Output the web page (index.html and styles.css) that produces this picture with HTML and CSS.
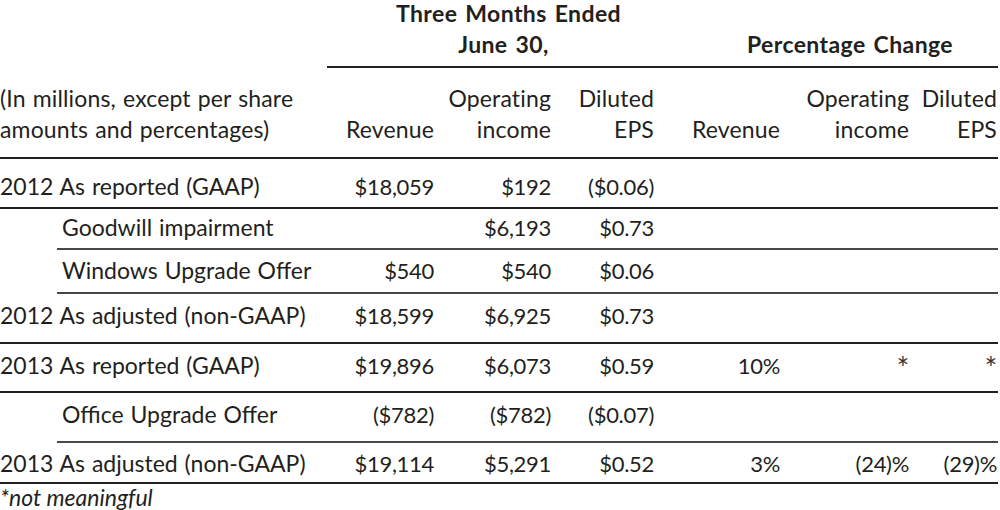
FILE: index.html
```html
<!DOCTYPE html>
<html lang="en">
<head>
<meta charset="utf-8">
<title>Three Months Ended June 30</title>
<link rel="stylesheet" href="styles.css">
</head>
<body>
<div class="sheet">
  <div class="group-head">
    <div class="gh-line1"><span class="gh-three">Three Months Ended</span></div>
    <div class="gh-line2"><span class="gh-june">June 30,</span><span class="gh-pct">Percentage Change</span></div>
  </div>

  <div class="row col-head">
    <div class="c label">(In millions, except per share<br>amounts and percentages)</div>
    <div class="c c2">Revenue</div>
    <div class="c c3">Operating<br>income</div>
    <div class="c c4">Diluted<br>EPS</div>
    <div class="c c5">Revenue</div>
    <div class="c c6">Operating<br>income</div>
    <div class="c c7">Diluted<br>EPS</div>
  </div>

  <div class="row r-a">
    <div class="c label">2012 As reported (GAAP)</div>
    <div class="c c2">$18,059</div>
    <div class="c c3">$192</div>
    <div class="c c4">($0.06)</div>
    <div class="c c5"></div>
    <div class="c c6"></div>
    <div class="c c7"></div>
  </div>

  <div class="row sub r-b">
    <div class="c label">Goodwill impairment</div>
    <div class="c c2"></div>
    <div class="c c3">$6,193</div>
    <div class="c c4">$0.73</div>
    <div class="c c5"></div>
    <div class="c c6"></div>
    <div class="c c7"></div>
  </div>

  <div class="row sub r-c">
    <div class="c label">Windows Upgrade Offer</div>
    <div class="c c2">$540</div>
    <div class="c c3">$540</div>
    <div class="c c4">$0.06</div>
    <div class="c c5"></div>
    <div class="c c6"></div>
    <div class="c c7"></div>
  </div>

  <div class="row r-d">
    <div class="c label">2012 As adjusted (non-GAAP)</div>
    <div class="c c2">$18,599</div>
    <div class="c c3">$6,925</div>
    <div class="c c4">$0.73</div>
    <div class="c c5"></div>
    <div class="c c6"></div>
    <div class="c c7"></div>
  </div>

  <div class="row r-e">
    <div class="c label">2013 As reported (GAAP)</div>
    <div class="c c2">$19,896</div>
    <div class="c c3">$6,073</div>
    <div class="c c4">$0.59</div>
    <div class="c c5">10%</div>
    <div class="c c6 ast">*</div>
    <div class="c c7 ast">*</div>
  </div>

  <div class="row sub r-f">
    <div class="c label">Office Upgrade Offer</div>
    <div class="c c2">($782)</div>
    <div class="c c3">($782)</div>
    <div class="c c4">($0.07)</div>
    <div class="c c5"></div>
    <div class="c c6"></div>
    <div class="c c7"></div>
  </div>

  <div class="row r-g">
    <div class="c label">2013 As adjusted (non-GAAP)</div>
    <div class="c c2">$19,114</div>
    <div class="c c3">$5,291</div>
    <div class="c c4">$0.52</div>
    <div class="c c5">3%</div>
    <div class="c c6">(24)%</div>
    <div class="c c7">(29)%</div>
  </div>

  <div class="footnote">*not meaningful</div>
</div>
</body>
</html>
```

FILE: styles.css
```css
html, body {
  margin: 0;
  padding: 0;
  background: #ffffff;
}

body {
  font-family: Lato, "Open Sans", "Liberation Sans", sans-serif;
  font-size: 22px;
  color: #231f20;
}

.sheet {
  width: 998px;
}

/* top grouped headings */
.group-head {
  margin-left: 327px;
  border-bottom: 2px solid #231f20;
  font-weight: 700;
  font-size: 23px;
  letter-spacing: 0.4px;
  word-spacing: 2px;
}

.gh-line1 {
  display: flex;
  height: 26px;
  line-height: 26px;
}

.gh-three {
  width: 363px;
  text-align: center;
}

.gh-line2 {
  display: flex;
  line-height: 31px;
  padding-top: 3px;
  padding-bottom: 6px;
}

.gh-june {
  width: 353px;
  text-align: center;
}

.gh-pct {
  flex: 1;
  padding-left: 22px;
  text-align: center;
}

/* rows */
.row {
  display: flex;
  line-height: 31px;
  border-bottom: 2px solid #231f20;
}

.row.sub {
  margin-left: 57px;
  border-bottom-color: #4a4747;
}

.c {
  text-align: right;
  white-space: nowrap;
  font-size: 22px;
  letter-spacing: -0.3px;
}

.c.label,
.col-head .c {
  font-size: 23px;
  letter-spacing: 0;
  word-spacing: 1px;
}

.col-head .c {
  letter-spacing: 0.15px;
}

.c.label {
  width: 340px;
  text-align: left;
}

.row.sub .c.label {
  width: 278px;
  padding-left: 5px;
}

.c2 { width: 94px; }
.c3 { width: 117px; }
.c4 { width: 103px; }
.c5 { width: 126px; }
.c6 { width: 129px; }
.c7 { width: 88px; padding-right: 1px; }

.c.ast {
  font-size: 30px;
  line-height: 27px;
  padding-top: 4px;
  color: #3a3637;
}

.col-head {
  align-items: flex-end;
  padding-top: 15px;
  padding-bottom: 12px;
}

.r-a { padding-top: 12px; padding-bottom: 5px; }
.r-b { padding-top: 3px; padding-bottom: 5px; }
.r-c { padding-top: 5px; padding-bottom: 6px; }
.r-d { padding-top: 6px; padding-bottom: 11px; }
.r-e { padding-top: 6px; padding-bottom: 10px; }
.r-f { padding-top: 6px; padding-bottom: 11px; }
.r-g { padding-top: 5px; padding-bottom: 3px; }

.footnote {
  font-style: italic;
  font-size: 23px;
  line-height: 26px;
}
```
